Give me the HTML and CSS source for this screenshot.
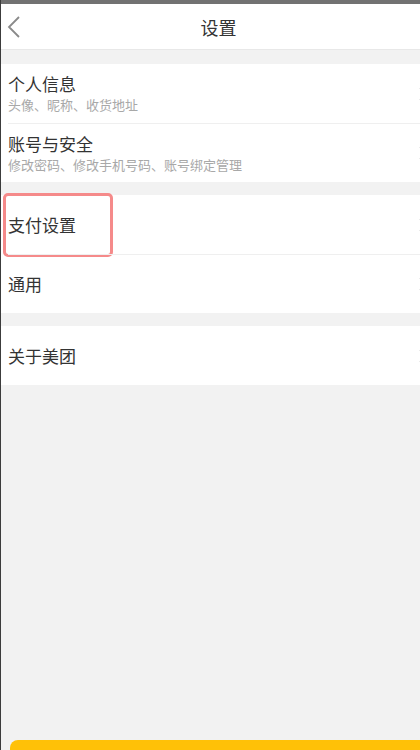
FILE: index.html
```html
<!DOCTYPE html>
<html lang="zh-CN">
<head>
    <meta charset="UTF-8">
    <meta name="viewport" content="width=device-width, initial-scale=1.0">
    <title>设置</title>
    <link rel="stylesheet" href="styles.css">
</head>
<body>
    <div class="screen">
        <div class="status-bar"></div>

        <div class="header">
            <svg class="back" width="14" height="22" viewBox="0 0 14 22">
                <path d="M12 1 L2 11 L12 21" fill="none" stroke="#8a8a8a" stroke-width="1.8"/>
            </svg>
            <div class="title">设置</div>
        </div>

        <div class="group group-first">
            <div class="row">
                <div class="row-text">
                    <div class="row-title">个人信息</div>
                    <div class="row-sub">头像、昵称、收货地址</div>
                </div>
                <svg class="arrow" width="8" height="14" viewBox="0 0 8 14"><path d="M1 1 L7 7 L1 13" fill="none" stroke="#b5b5b5" stroke-width="1.5"/></svg>
            </div>
            <div class="row">
                <div class="row-text">
                    <div class="row-title">账号与安全</div>
                    <div class="row-sub">修改密码、修改手机号码、账号绑定管理</div>
                </div>
                <svg class="arrow" width="8" height="14" viewBox="0 0 8 14"><path d="M1 1 L7 7 L1 13" fill="none" stroke="#b5b5b5" stroke-width="1.5"/></svg>
            </div>
        </div>

        <div class="group">
            <div class="row">
                <div class="row-title">支付设置</div>
                <svg class="arrow" width="8" height="14" viewBox="0 0 8 14"><path d="M1 1 L7 7 L1 13" fill="none" stroke="#b5b5b5" stroke-width="1.5"/></svg>
                <div class="highlight"></div>
            </div>
            <div class="row">
                <div class="row-title">通用</div>
                <svg class="arrow" width="8" height="14" viewBox="0 0 8 14"><path d="M1 1 L7 7 L1 13" fill="none" stroke="#b5b5b5" stroke-width="1.5"/></svg>
            </div>
        </div>

        <div class="group">
            <div class="row">
                <div class="row-title">关于美团</div>
                <svg class="arrow" width="8" height="14" viewBox="0 0 8 14"><path d="M1 1 L7 7 L1 13" fill="none" stroke="#b5b5b5" stroke-width="1.5"/></svg>
            </div>
        </div>

        <div class="logout"></div>
    </div>
</body>
</html>
```

FILE: styles.css
```css
body {
    margin: 0;
    font-family: "Noto Sans CJK SC", "Noto Sans", sans-serif;
    background: #f2f2f2;
}

.screen {
    width: 420px;
    height: 750px;
    display: flex;
    flex-direction: column;
    overflow: hidden;
    box-sizing: border-box;
    border-left: 1px solid #3c3c3c;
    background: #f2f2f2;
}

.status-bar {
    height: 4px;
    background: #727272;
    margin-left: -1px;
    flex-shrink: 0;
}

.header {
    position: relative;
    height: 45px;
    background: #fff;
    border-bottom: 1px solid #e8e8e8;
    display: flex;
    align-items: center;
    justify-content: center;
    padding-left: 16px;
    flex-shrink: 0;
}

.back {
    position: absolute;
    left: 6px;
    top: 12px;
}

.title {
    font-size: 18px;
    color: #333;
}

.group {
    background: #fff;
    margin-top: 13px;
    flex-shrink: 0;
}

.group-first {
    margin-top: 14px;
}

.row {
    position: relative;
    height: 59px;
    box-sizing: border-box;
    display: flex;
    align-items: center;
    padding-left: 7px;
    border-top: 1px solid #efefef;
}

.row:first-child {
    border-top: none;
}

.row + .row {
    margin-left: 7px;
    padding-left: 0;
}

.row-text {
    flex: 1;
}

.row-title {
    flex: 1;
    font-size: 17px;
    color: #333;
    line-height: 22px;
}

.row-sub {
    font-size: 13px;
    color: #a8a8a8;
    line-height: 18px;
    margin-top: 1px;
}

.arrow {
    flex-shrink: 0;
    margin-right: -7px;
}

.highlight {
    position: absolute;
    left: 2px;
    top: -2px;
    width: 110px;
    height: 64px;
    box-sizing: border-box;
    border: 3px solid #f58a8a;
    border-radius: 5px;
}

.logout {
    margin-top: auto;
    margin-left: 9px;
    margin-bottom: -34px;
    height: 44px;
    width: 420px;
    border-radius: 8px;
    background: #ffc107;
    flex-shrink: 0;
}
```
